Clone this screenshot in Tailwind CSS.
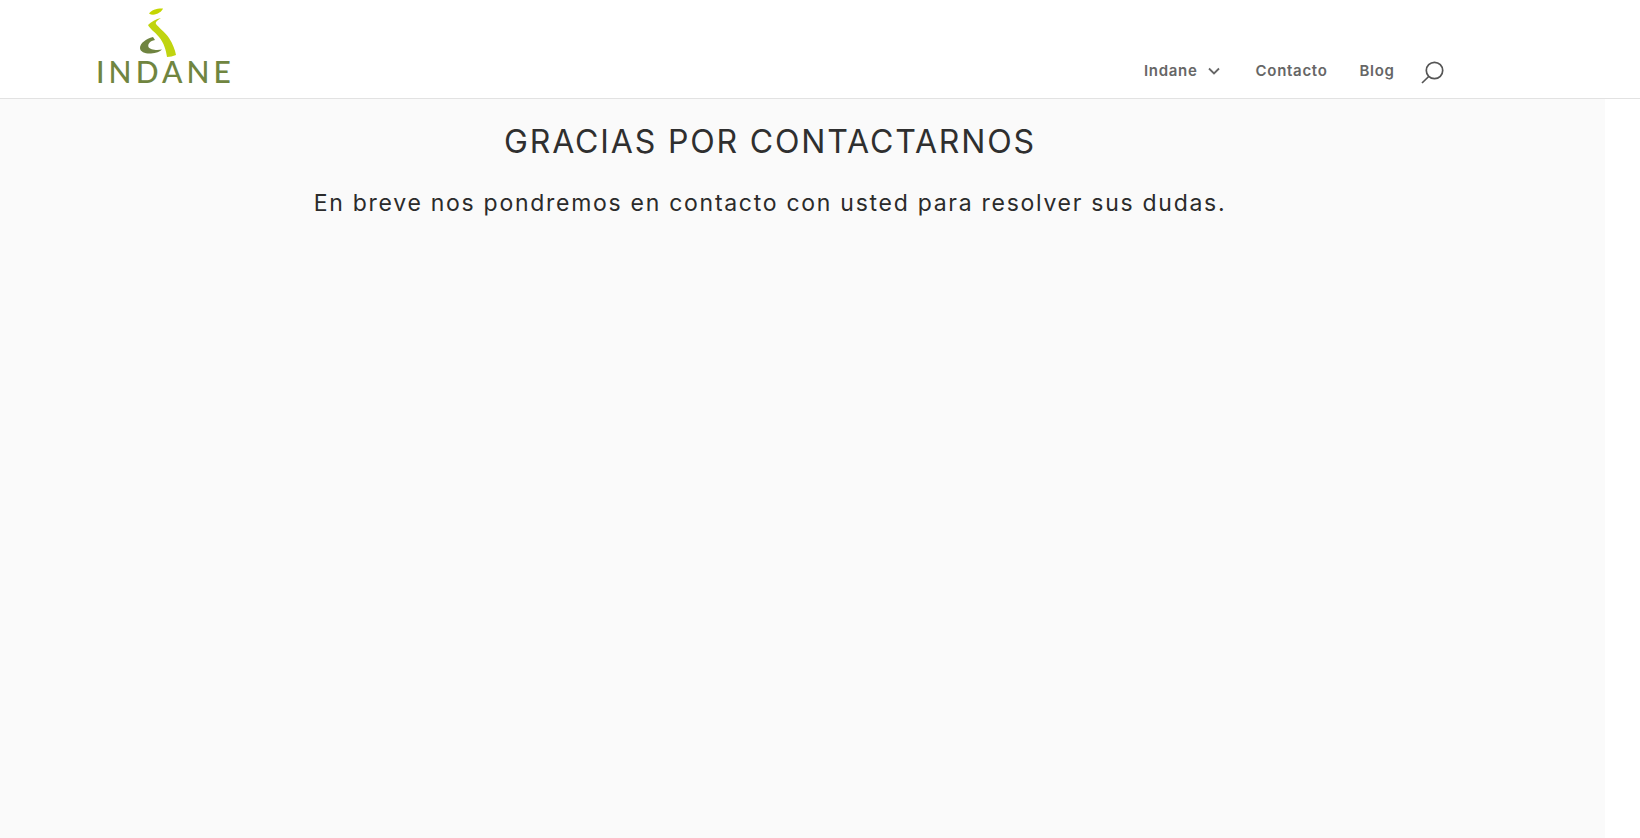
<!DOCTYPE html>
<html lang="es">
<head>
<meta charset="utf-8">
<title>Indane</title>
<script src="https://cdn.jsdelivr.net/npm/@tailwindcss/browser@4"></script>
</head>
<body class="bg-white font-['Inter',sans-serif] overflow-hidden">
<div class="w-[1640px] h-[838px] flex flex-col bg-white">
  <header class="h-[99px] shrink-0 bg-white border-b border-[#e2e2e2] flex items-start pl-[98px]">
    <div class="w-[133px] h-[98px] relative">
      <svg class="block" width="133" height="60" viewBox="98 0 133 60">
        <path d="M153 37 C146 39 140 43 140 48 C140 52 146 54 151 53.5 C156 53 160 52 162 49.5 C157 50.5 150 50 148.5 47 C147.5 44 150 41 155 40 Z" fill="#6f8440"/>
        <path d="M149 13.5 C151 10 158 8 163 8.5 C162 12 154 17 149 13.5Z" fill="#c4d600"/>
        <path d="M148 25 C151 22 156 19 161 18 C158 20 155 22 156 24 C158 27 165 32 169 38 C173 44 175 50 176 55 C173 56 170 57 167 57 C166 50 164 43 159 37 C155 32 150 29 148 25Z" fill="#c0d410"/>
      </svg>
      <span class="absolute left-[-2px] top-[55px] text-[30px] leading-[32px] tracking-[4.1px] font-medium text-[#708540] font-['Lato',sans-serif] whitespace-nowrap">INDANE</span>
    </div>
    <nav class="ml-[913px] mt-[58px] flex items-center text-[15px] leading-[22px] font-semibold tracking-[0.7px] text-[#666666]">
      <span>Indane</span>
      <svg class="ml-[9px]" width="14" height="12" viewBox="0 0 14 12" fill="none" stroke="#666666" stroke-width="1.8"><path d="M2 3.5l5 5 5-5"/></svg>
      <span class="ml-[35px]">Contacto</span>
      <span class="ml-[32px]">Blog</span>
      <svg class="ml-[26px] mt-[3px] self-start" width="23" height="23" viewBox="0 0 23 23" fill="none" stroke="#555555" stroke-width="1.7"><circle cx="13.5" cy="9.5" r="8.2"/><path d="M7.7 15.5L1 22"/></svg>
    </nav>
  </header>
  <main class="w-[1605px] grow bg-[#fafafa] flex flex-col items-center pr-[65px]">
    <h1 class="mt-[20px] text-[32px] leading-[46px] font-normal text-[#2f2f2f] tracking-[1.85px] whitespace-nowrap">GRACIAS POR CONTACTARNOS</h1>
    <p class="mt-[20px] text-[23px] leading-[36px] font-normal text-[#2b2b2b] tracking-[1.72px] whitespace-nowrap">En breve nos pondremos en contacto con usted para resolver sus dudas.</p>
  </main>
</div>
</body>
</html>
